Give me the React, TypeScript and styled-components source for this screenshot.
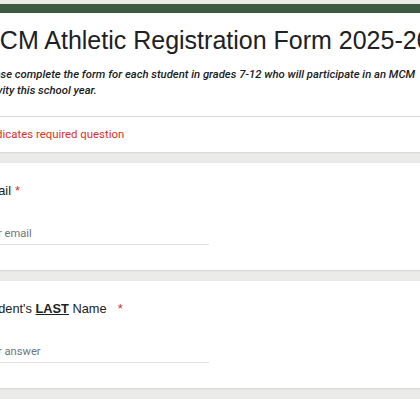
import styled, { createGlobalStyle } from 'styled-components';

const GlobalStyle = createGlobalStyle`
  html, body {
    margin: 0;
    padding: 0;
    overflow: hidden;
    background: #ebecea;
  }
`;

const Page = styled.div`
  width: 420px;
  height: 420px;
  overflow: hidden;
  background: #ebecea;
  padding-top: 4px;
  box-sizing: border-box;
`;

const Column = styled.div`
  margin-left: -45px;
  width: 720px;
  display: flex;
  flex-direction: column;
  gap: 11px;
`;

const Card = styled.div<{ $top?: boolean }>`
  background: #fff;
  border-radius: 8px;
  box-shadow: 0 1px 2px rgba(60, 64, 67, 0.12);
  border-top: ${({ $top }) => ($top ? '9px solid #3c5b41' : 'none')};
  overflow: hidden;
`;

const HeaderBody = styled.div`
  padding: 12px 24px 17px;
  border-bottom: 1px solid #dadce0;
`;

const Title = styled.h1`
  margin: 0;
  font-family: Arial, 'Liberation Sans', sans-serif;
  font-weight: 400;
  font-size: 25px;
  line-height: 30px;
  color: #202124;
  white-space: nowrap;
`;

const Description = styled.p`
  margin: 12px 0 0;
  font-family: Roboto, 'Noto Sans', sans-serif;
  font-style: italic;
  font-weight: 500;
  font-size: 11.3px;
  line-height: 16px;
  color: #202124;
  white-space: nowrap;
`;

const Required = styled.div`
  padding: 9px 24px 10px;
  font-family: Roboto, 'Noto Sans', sans-serif;
  font-size: 11.4px;
  line-height: 16px;
  color: #d93025;
`;

const Question = styled.div`
  padding: 16px 24px 25px;
`;

const Label = styled.div`
  font-family: Arial, 'Liberation Sans', sans-serif;
  font-size: 12.8px;
  line-height: 24px;
  color: #202124;

  b {
    font-weight: 700;
    text-decoration: underline;
  }
`;

const Star = styled.span`
  color: #d93025;
  margin-left: 4px;
`;

const Input = styled.div`
  margin-top: 23px;
  width: 230px;
  padding-bottom: 2px;
  border-bottom: 1px solid #e0e0e0;
  font-family: Roboto, 'Noto Sans', sans-serif;
  font-size: 11.2px;
  line-height: 16px;
  color: #70757a;
`;

export default function App() {
  return (
    <Page>
      <GlobalStyle />
      <Column>
        <Card $top>
          <HeaderBody>
            <Title>MCM Athletic Registration Form 2025-2026</Title>
            <Description>
              Please complete the form for each student in grades 7-12 who will participate in an MCM
              <br />
              activity this school year.
            </Description>
          </HeaderBody>
          <Required>* Indicates required question</Required>
        </Card>
        <Card>
          <Question>
            <Label>
              Email<Star>*</Star>
            </Label>
            <Input>Your email</Input>
          </Question>
        </Card>
        <Card>
          <Question>
            <Label>
              Student's <b>LAST</b> Name&nbsp;&nbsp;<Star>*</Star>
            </Label>
            <Input>Your answer</Input>
          </Question>
        </Card>
        <Card>
          <Question>
            <Label>Student's FIRST Name</Label>
          </Question>
        </Card>
      </Column>
    </Page>
  );
}
